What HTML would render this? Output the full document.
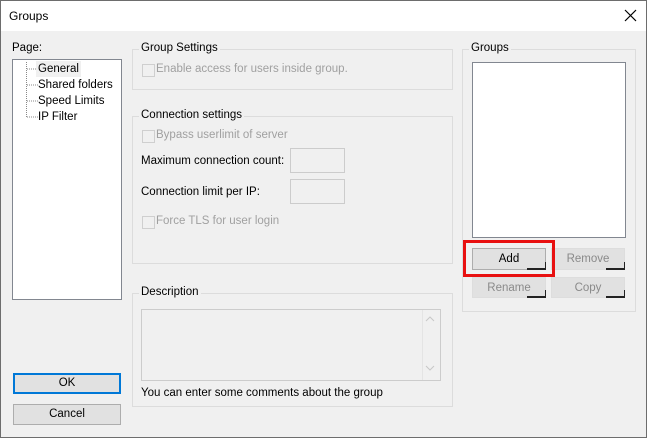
<!DOCTYPE html><html><head><style>
*{box-sizing:border-box;margin:0;padding:0}
body{width:647px;height:438px;overflow:hidden;background:#f0f0f0;font:11.5px "Liberation Sans",sans-serif;color:#000;position:relative}
.a{position:absolute}
.win{left:0;top:0;width:647px;height:438px;border:1px solid #6d6d6d}
.title{left:1px;top:1px;width:645px;height:30px;background:#fff}
.gb{position:absolute;border:1px solid #dcdcdc}
.lg{position:absolute;background:#f0f0f0;padding:0 2px;white-space:nowrap}
.cb{position:absolute;width:13px;height:13px;border:1px solid #cfcfcf;background:#f0f0f0}
.dis{color:#a0a0a0}
.inp{position:absolute;border:1px solid #ccc;background:#f0f0f0}
.btn{position:absolute;background:#e1e1e1;border:1px solid #adadad;text-align:center;line-height:19px}
.btn2{position:absolute;background:#e1e1e1;border:1px solid #ddd;text-align:center;line-height:20px;color:#8a8a8a}
.btn2:after{content:"";position:absolute;right:-1px;bottom:-1px;width:18px;height:6px;border-right:1px solid #222;border-bottom:2px solid #222}
</style></head><body>
<div class="a win"></div>
<div class="a title"></div>
<div class="a" style="left:9px;top:9px;font-size:12px">Groups</div>
<svg class="a" style="left:624px;top:9px" width="13" height="13"><path d="M1 1L12 12M12 1L1 12" stroke="#000" stroke-width="1.2"/></svg>

<div class="a" style="left:12px;top:42px">Page:</div>
<div class="a" style="left:12px;top:59px;width:110px;height:241px;background:#fff;border:1px solid #828790"></div>
<svg class="a" style="left:25px;top:62px" width="14" height="60"><path d="M1.5 0V56M2 7H13M2 23H13M2 39H13M2 55H13" stroke="#888" stroke-dasharray="1 1"/></svg>
<div class="a" style="left:36px;top:61px;background:#f0f0f0;padding:0 2px;height:16px;line-height:16px">General</div>
<div class="a" style="left:38px;top:77px;line-height:16px">Shared folders</div>
<div class="a" style="left:38px;top:93px;line-height:16px">Speed Limits</div>
<div class="a" style="left:38px;top:109px;line-height:16px">IP Filter</div>

<div class="btn" style="left:13px;top:373px;width:108px;height:21px;border:2px solid #0078d7;line-height:17px">OK</div>
<div class="btn" style="left:13px;top:404px;width:108px;height:21px">Cancel</div>

<div class="gb" style="left:132px;top:49px;width:321px;height:41px"></div>
<div class="lg" style="left:139px;top:42px">Group Settings</div>
<div class="cb" style="left:142px;top:64px"></div>
<div class="a dis" style="left:156px;top:63px">Enable access for users inside group.</div>

<div class="gb" style="left:132px;top:116px;width:321px;height:148px"></div>
<div class="lg" style="left:139px;top:109px">Connection settings</div>
<div class="cb" style="left:142px;top:130px"></div>
<div class="a dis" style="left:156px;top:129px">Bypass userlimit of server</div>
<div class="a" style="left:141px;top:155px">Maximum connection count:</div>
<div class="inp" style="left:290px;top:148px;width:55px;height:25px"></div>
<div class="a" style="left:141px;top:186px">Connection limit per IP:</div>
<div class="inp" style="left:290px;top:179px;width:55px;height:25px"></div>
<div class="cb" style="left:142px;top:216px"></div>
<div class="a dis" style="left:156px;top:215px">Force TLS for user login</div>

<div class="gb" style="left:132px;top:293px;width:321px;height:114px"></div>
<div class="lg" style="left:139px;top:286px">Description</div>
<div class="inp" style="left:141px;top:309px;width:300px;height:72px"></div>
<div class="a" style="left:422px;top:310px;width:1px;height:70px;background:#e4e4e4"></div>
<svg class="a" style="left:425px;top:315px" width="10" height="60"><path d="M1 6L5 2L9 6M1 51L5 55L9 51" stroke="#c8c8c8" fill="none"/></svg>
<div class="a" style="left:141px;top:387px">You can enter some comments about the group</div>

<div class="gb" style="left:462px;top:49px;width:174px;height:263px"></div>
<div class="lg" style="left:469px;top:42px">Groups</div>
<div class="a" style="left:472px;top:62px;width:154px;height:176px;background:#fff;border:1px solid #828790"></div>
<div class="btn2" style="left:472px;top:248px;width:74px;height:22px;color:#000;border-color:#adadad">Add</div>
<div class="btn2" style="left:551px;top:248px;width:74px;height:22px">Remove</div>
<div class="btn2" style="left:472px;top:277px;width:74px;height:21px">Rename</div>
<div class="btn2" style="left:551px;top:277px;width:74px;height:21px">Copy</div>
<div class="a" style="left:463px;top:240px;width:92px;height:37px;border:3px solid #e81010"></div>
</body></html>
